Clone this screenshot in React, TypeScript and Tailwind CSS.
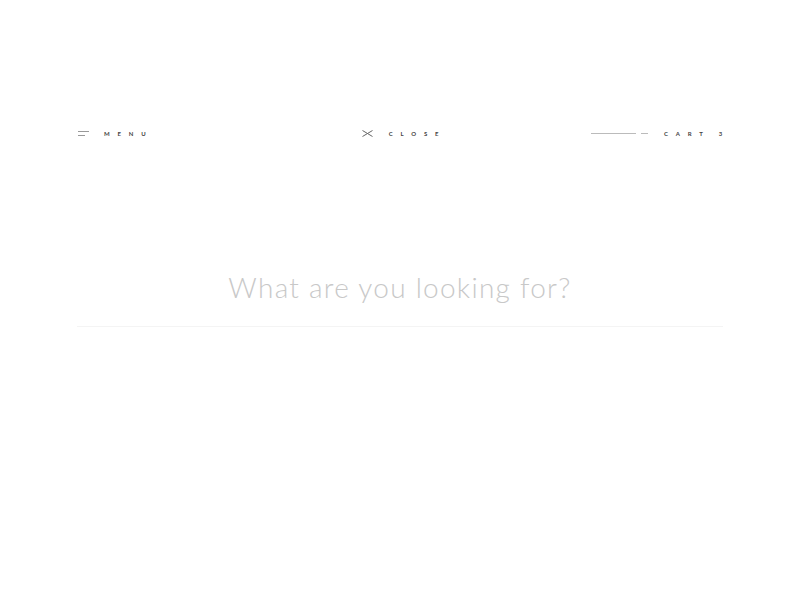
import { useState } from 'react';

const navText = 'text-[6px] font-bold tracking-[1.3em] text-[#444] leading-none';

const App = () => {
  const [query, setQuery] = useState('');

  return (
    <div className="min-h-[600px] w-full bg-white font-['Lato','Liberation_Sans',sans-serif]">
      <header className="grid grid-cols-3 items-center px-[78px] pt-[130px]">
        {/* menu */}
        <button className="flex items-center gap-[15px] justify-self-start">
          <span className="flex flex-col gap-[3px]">
            <span className="block h-px w-[11px] bg-[#999]" />
            <span className="block h-px w-[7px] bg-[#999]" />
          </span>
          <span className={navText}>MENU</span>
        </button>

        {/* close */}
        <button className="flex items-center gap-[16px] justify-self-center pl-[8px]">
          <svg width="11" height="7" viewBox="0 0 11 7" className="text-[#666]">
            <path d="M0.5 0.5 L10.5 6.5 M0.5 6.5 L10.5 0.5" stroke="currentColor" strokeWidth="1" fill="none" />
          </svg>
          <span className={navText}>CLOSE</span>
        </button>

        {/* cart */}
        <div className="flex items-center justify-self-end">
          <span className="block h-px w-[45px] bg-[#bbb]" />
          <span className="ml-[5px] block h-px w-[7px] bg-[#bbb]" />
          <span className={`${navText} ml-[16px]`}>CART</span>
          <span className={`${navText} ml-[8px] mr-[-8px]`}>3</span>
        </div>
      </header>

      <div className="mx-[77px] mt-[129px] border-b border-[#f4f4f4] pb-[18px]">
        <input
          value={query}
          onChange={(e) => setQuery(e.target.value)}
          placeholder="What are you looking for?"
          className="w-full bg-transparent text-center text-[28px] font-light tracking-[0.045em] text-[#999] outline-none placeholder:text-[#c8c8c8]"
        />
      </div>
    </div>
  );
};

export default App;
